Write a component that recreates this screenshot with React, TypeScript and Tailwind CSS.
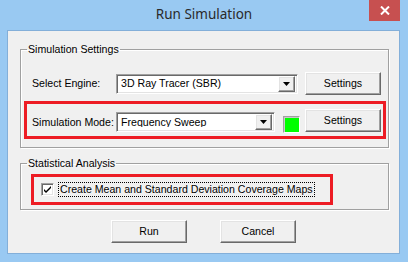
import React from 'react';

// Classic Win32 dialog: "Run Simulation"

const font = { fontFamily: '"Liberation Sans", Arial, sans-serif' };

const raised =
  'border border-t-white border-l-white border-b-[#696969] border-r-[#696969] shadow-[inset_-1px_-1px_0_#a0a0a0,inset_1px_1px_0_#e3e3e3] bg-[#f0f0f0]';

const PushButton: React.FC<{ label: string; className?: string }> = ({ label, className = '' }) => (
  <button
    className={`${raised} w-[76px] h-[23px] shrink-0 text-[10.6px] text-black flex items-center justify-center ${className}`}
  >
    {label}
  </button>
);

const Combo: React.FC<{ value: string; width: string }> = ({ value, width }) => (
  <div
    className={`${width} h-[20px] shrink-0 bg-white border border-t-[#a0a0a0] border-l-[#a0a0a0] border-b-white border-r-white shadow-[inset_1px_1px_0_#696969,inset_-1px_-1px_0_#e3e3e3] flex items-center p-[2px]`}
  >
    <span className="flex-1 pl-[2px] text-[10.6px] text-black leading-none whitespace-nowrap overflow-hidden">
      {value}
    </span>
    <div className={`${raised} w-[17px] h-[16px] flex items-center justify-center`}>
      <svg width="7" height="4" viewBox="0 0 7 4">
        <path d="M0 0h7L3.5 4z" fill="#000" />
      </svg>
    </div>
  </div>
);

const Group: React.FC<{ title: string; className?: string; children: React.ReactNode }> = ({
  title,
  className = '',
  children,
}) => (
  <fieldset
    className={`w-[369px] ml-[12px] border border-[#a0a0a0] shadow-[inset_1px_1px_0_#fff,1px_1px_0_#fff] ${className}`}
  >
    <legend className="ml-[6px] px-[1px] text-[10.6px] leading-[14px] text-black">{title}</legend>
    {children}
  </fieldset>
);

export default function App() {
  return (
    <div className="w-[408px] h-[262px] bg-[#99c9f2] flex flex-col" style={font}>
      {/* title bar */}
      <div className="h-[30px] relative flex items-center justify-center">
        <span
          className="text-[13.5px] text-[#2a2a2a] pb-[1px]"
          style={{ fontFamily: '"Noto Sans", "Open Sans", sans-serif' }}
        >
          Run Simulation
        </span>
        <div className="absolute top-0 right-[8px] w-[31px] h-[21px] bg-[#c75050] flex items-center justify-center">
          <svg width="10" height="9" viewBox="0 0 10 9">
            <path d="M1 0.5 L9 8.5 M9 0.5 L1 8.5" stroke="#fff" strokeWidth="2" />
          </svg>
        </div>
      </div>

      {/* client area */}
      <div className="ml-[7px] w-[393px] h-[224px] border border-[#83afd9] bg-[#f0f0f0] flex flex-col">
        <Group title="Simulation Settings" className="mt-[11px] pt-[16px] pb-[8px]">
          <div className="flex items-center pl-[11px]">
            <span className="w-[84px] shrink-0 whitespace-nowrap text-[10.6px] text-black">Select Engine:</span>
            <Combo value="3D Ray Tracer (SBR)" width="w-[182px]" />
            <PushButton label="Settings" className="ml-[7px]" />
          </div>
          <div className="ml-[3px] mt-[6px] w-[362px] h-[38px] border-[3px] border-[#ed1c24] flex items-start pl-[5px]">
            <span className="w-[84px] shrink-0 whitespace-nowrap mt-[12px] text-[10.6px] leading-[13px] text-black">
              Simulation Mode:
            </span>
            <div className="mt-[8px]">
              <Combo value="Frequency Sweep" width="w-[159px]" />
            </div>
            <div className="ml-[8px] mt-[12px] w-[17px] h-[17px] shrink-0 bg-[#00ff00] border border-t-[#a0a0a0] border-l-[#a0a0a0] border-b-white border-r-white shadow-[inset_1px_1px_0_#c8c8c8]" />
            <PushButton label="Settings" className="ml-[5px] mt-[5px]" />
          </div>
        </Group>

        <Group title="Statistical Analysis" className="mt-[8px] pt-[4px] pb-[4px]">
          <div className="ml-[10px] w-[302px] h-[31px] border-[3px] border-[#ed1c24] flex items-center pl-[7px]">
            <div className="w-[13px] h-[13px] shrink-0 bg-white border border-t-[#a0a0a0] border-l-[#a0a0a0] border-b-white border-r-white shadow-[inset_1px_1px_0_#696969,inset_-1px_-1px_0_#e3e3e3] flex items-center justify-center">
              <svg width="7" height="7" viewBox="0 0 7 7">
                <path d="M0 3 L0 5 L2 7 L7 2 L7 0 L2 5 Z" fill="#000" />
              </svg>
            </div>
            <span className="ml-[4px] px-[1px] h-[15px] flex items-center border border-dotted border-black text-[10.6px] text-black whitespace-nowrap">
              Create Mean and Standard Deviation Coverage Maps
            </span>
          </div>
        </Group>

        <div className="mt-[10px] flex justify-center gap-[33px]">
          <PushButton label="Run" />
          <PushButton label="Cancel" />
        </div>
      </div>
    </div>
  );
}
